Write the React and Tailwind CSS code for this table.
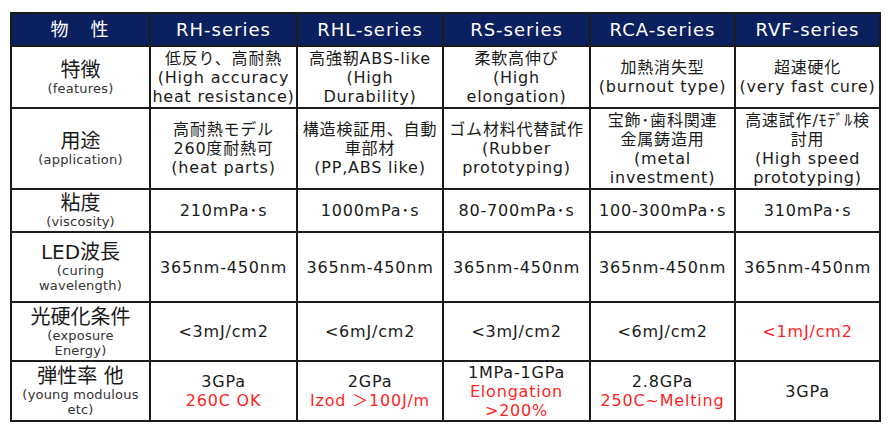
const font = "font-['DejaVu_Sans','Noto_Sans_CJK_JP',sans-serif]"

const headers = ["RH-series", "RHL-series", "RS-series", "RCA-series", "RVF-series"]
const colWidths = ["w-[139px]", "w-[147px]", "w-[146px]", "w-[147px]", "w-[145px]", "w-[145px]"]

// each cell is a list of lines; a line starting with "!" is red
const rows = [
  {
    h: "h-[62px]",
    label: "特徴",
    sub: ["(features)"],
    cells: [
      ["低反り、高耐熱", "(High accuracy", "heat resistance)"],
      ["高強靭ABS-like", "(High", "Durability)"],
      ["柔軟高伸び", "(High", "elongation)"],
      ["加熱消失型", "(burnout type)"],
      ["超速硬化", "(very fast cure)"],
    ],
  },
  {
    h: "h-[81px]",
    label: "用途",
    sub: ["(application)"],
    cells: [
      ["高耐熱モデル", "260度耐熱可", "(heat parts)"],
      ["構造検証用、自動", "車部材", "(PP,ABS like)"],
      ["ゴム材料代替試作", "(Rubber", "prototyping)"],
      ["宝飾･歯科関連", "金属鋳造用", "(metal", "investment)"],
      ["高速試作/ﾓﾃﾞﾙ検", "討用", "(High speed", "prototyping)"],
    ],
  },
  {
    h: "h-[43px]",
    label: "粘度",
    sub: ["(viscosity)"],
    cells: [["210mPa･s"], ["1000mPa･s"], ["80-700mPa･s"], ["100-300mPa･s"], ["310mPa･s"]],
  },
  {
    h: "h-[70px]",
    label: "LED波長",
    sub: ["(curing", "wavelength)"],
    cells: [["365nm-450nm"], ["365nm-450nm"], ["365nm-450nm"], ["365nm-450nm"], ["365nm-450nm"]],
  },
  {
    h: "h-[59px]",
    label: "光硬化条件",
    sub: ["(exposure", "Energy)"],
    cells: [["<3mJ/cm2"], ["<6mJ/cm2"], ["<3mJ/cm2"], ["<6mJ/cm2"], ["!<1mJ/cm2"]],
  },
  {
    h: "h-[60px]",
    label: "弾性率 他",
    sub: ["(young modulous", "etc)"],
    cells: [
      ["3GPa", "!260C OK"],
      ["2GPa", "!Izod ＞100J/m"],
      ["1MPa-1GPa", "!Elongation", "!>200%"],
      ["2.8GPa", "!250C~Melting"],
      ["3GPa"],
    ],
  },
]

const cellBorder = "border-2 border-[#1c1c1c] p-0 text-center align-middle"

export default function App() {
  return (
    <div className={`w-[894px] h-[426px] bg-white pt-[12px] pl-[10px] ${font}`}>
      <table className="table-fixed border-collapse w-[871px]">
        <colgroup>
          {colWidths.map((w, i) => (
            <col key={i} className={w} />
          ))}
        </colgroup>
        <thead>
          <tr className="h-[33px] bg-[#0b215f] text-white">
            <th className={`${cellBorder} font-normal text-[18px] tracking-[2px]`}>物　性</th>
            {headers.map((h) => (
              <th key={h} className={`${cellBorder} font-normal text-[18px] tracking-[1px]`}>
                {h}
              </th>
            ))}
          </tr>
        </thead>
        <tbody>
          {rows.map((row) => (
            <tr key={row.label} className={row.h}>
              <td className={`${cellBorder} text-[#1a1a1a]`}>
                <div className="text-[20px] leading-[22px]">{row.label}</div>
                {row.sub.map((s) => (
                  <div key={s} className="text-[13px] leading-[15px] tracking-[0.2px] text-[#333]">
                    {s}
                  </div>
                ))}
              </td>
              {row.cells.map((lines, i) => (
                <td key={i} className={`${cellBorder} text-[16px] leading-[19px] tracking-[0.8px]`}>
                  {lines.map((line, j) =>
                    line.startsWith("!") ? (
                      <div key={j} className="whitespace-nowrap text-[#ff1f1f]">
                        {line.slice(1)}
                      </div>
                    ) : (
                      <div key={j} className="whitespace-nowrap text-[#1a1a1a]">
                        {line}
                      </div>
                    )
                  )}
                </td>
              ))}
            </tr>
          ))}
        </tbody>
      </table>
    </div>
  )
}
